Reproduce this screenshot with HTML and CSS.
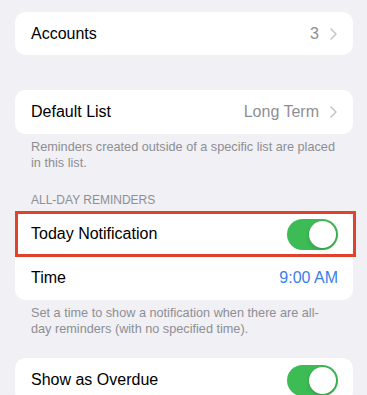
FILE: index.html
```html
<!DOCTYPE html>
<html lang="en">
<head>
<meta charset="utf-8">
<title>Reminders Settings</title>
<link rel="stylesheet" href="styles.css">
</head>
<body>
<main class="page">
  <section class="group g-accounts">
    <div class="row">
      <span class="label">Accounts</span>
      <span class="value">3</span>
      <svg class="chev" width="7" height="12" viewBox="0 0 7 12"><path d="M1 1l5 5-5 5" fill="none" stroke="currentColor" stroke-width="1.5" stroke-linecap="round" stroke-linejoin="round"/></svg>
    </div>
  </section>

  <section class="group g-default">
    <div class="row">
      <span class="label">Default List</span>
      <span class="value">Long Term</span>
      <svg class="chev" width="7" height="12" viewBox="0 0 7 12"><path d="M1 1l5 5-5 5" fill="none" stroke="currentColor" stroke-width="1.5" stroke-linecap="round" stroke-linejoin="round"/></svg>
    </div>
  </section>
  <p class="footer">Reminders created outside of a specific list are placed in this list.</p>

  <h2 class="header">ALL-DAY REMINDERS</h2>
  <section class="group">
    <div class="row highlighted">
      <span class="label">Today Notification</span>
      <span class="toggle"><span class="knob"></span></span>
      <span class="mark"></span>
    </div>
    <div class="row">
      <span class="label">Time</span>
      <span class="value blue">9:00 AM</span>
    </div>
  </section>
  <p class="footer">Set a time to show a notification when there are all-day reminders (with no specified time).</p>

  <section class="group g-overdue">
    <div class="row">
      <span class="label">Show as Overdue</span>
      <span class="toggle"><span class="knob"></span></span>
    </div>
  </section>
</main>
</body>
</html>
```

FILE: styles.css
```css
html, body {
  margin: 0;
  padding: 0;
  background: #f0f0f5;
  font-family: "Liberation Sans", Arial, sans-serif;
  color: #000;
  overflow: hidden;
}

.page {
  padding: 12px 14px 0 15px;
}

.group {
  background: #fff;
  border-radius: 10px;
}

.g-accounts .row {
  height: 43px;
}

.g-default {
  margin-top: 35px;
}

.g-overdue {
  margin-top: 21px;
}

.row {
  position: relative;
  height: 44px;
  display: flex;
  align-items: center;
  padding: 0 16px;
  font-size: 16px;
}

.label {
  flex: 1;
}

.value {
  color: #8e8e93;
}

.value.blue {
  color: #3a80ea;
  margin-right: -1px;
}

.chev {
  color: #c4c4c8;
  margin-left: 11px;
}

.footer {
  margin: 0;
  padding: 5px 16px 0;
  font-size: 12.7px;
  line-height: 16px;
  color: #8e8e93;
}

.header {
  margin: 21px 0 4px;
  padding: 0 16px;
  font-size: 12px;
  font-weight: normal;
  line-height: 16px;
  color: #8e8e93;
}

.toggle {
  width: 51px;
  height: 31px;
  border-radius: 16px;
  background: #3dbb55;
  position: relative;
  margin-right: -1px;
}

.knob {
  position: absolute;
  top: 2px;
  right: 2px;
  width: 27px;
  height: 27px;
  border-radius: 50%;
  background: #fff;
  box-shadow: 0 2px 4px rgba(0, 0, 0, 0.15), 0 0 0 0.5px rgba(0, 0, 0, 0.05);
}

.mark {
  position: absolute;
  top: -1px;
  left: 0;
  right: -3px;
  bottom: -1px;
  border: 3px solid #e0432c;
  pointer-events: none;
}
```
